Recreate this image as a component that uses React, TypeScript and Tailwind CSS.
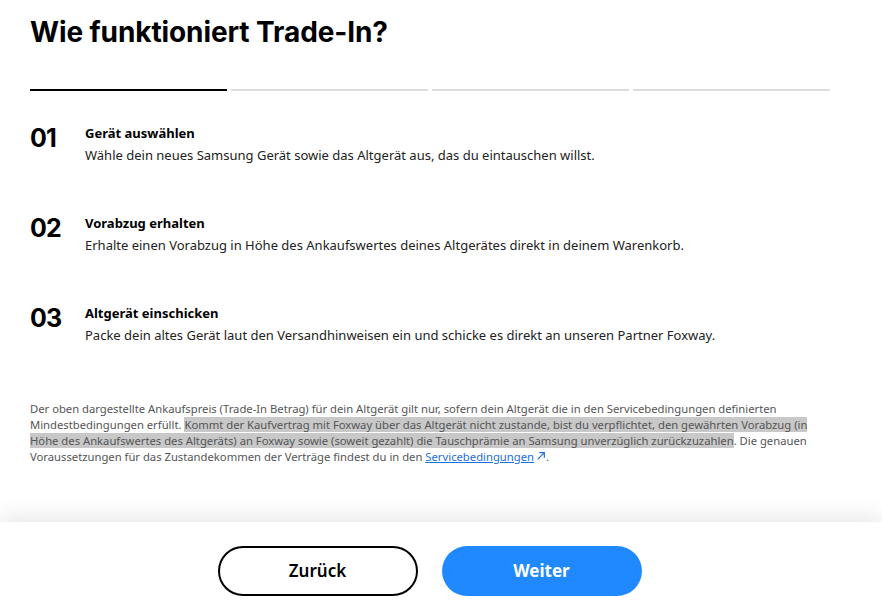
import React from 'react';

const steps = [
  {
    num: '01',
    title: 'Gerät auswählen',
    text: 'Wähle dein neues Samsung Gerät sowie das Altgerät aus, das du eintauschen willst.',
  },
  {
    num: '02',
    title: 'Vorabzug erhalten',
    text: 'Erhalte einen Vorabzug in Höhe des Ankaufswertes deines Altgerätes direkt in deinem Warenkorb.',
  },
  {
    num: '03',
    title: 'Altgerät einschicken',
    text: 'Packe dein altes Gerät laut den Versandhinweisen ein und schicke es direkt an unseren Partner Foxway.',
  },
];

const ExternalArrow = () => (
  <svg width="10" height="10" viewBox="0 0 12 12" className="inline align-baseline ml-[2px]" fill="none">
    <path d="M2 10L10 2M4 2h6v6" stroke="currentColor" strokeWidth="1.4" />
  </svg>
);

export default function App() {
  return (
    <div className="h-screen w-full bg-white flex flex-col overflow-hidden font-['Noto_Sans',sans-serif]">
      <div className="flex-1 overflow-hidden px-[30px]">
        <h1 className="pt-[12px] text-[28px] leading-[40px] font-bold text-black tracking-[-0.1px] font-['Inter',sans-serif]">
          Wie funktioniert Trade-In?
        </h1>

        <div className="mt-[37px] flex gap-1 w-[800px] items-start">
          <div className="flex-1 h-[2px] bg-black" />
          <div className="flex-1 h-[2px] bg-[#dddddd]" />
          <div className="flex-1 h-[2px] bg-[#dddddd]" />
          <div className="flex-1 h-[2px] bg-[#dddddd]" />
        </div>

        <ul className="mt-[32px] flex flex-col gap-[46px]">
          {steps.map((s) => (
            <li key={s.num} className="flex items-start">
              <span className="w-[55px] shrink-0 text-[25px] leading-[30px] font-bold text-black font-['Inter',sans-serif] tracking-[-0.8px]">
                {s.num}
              </span>
              <div className="flex flex-col">
                <span className="text-[13px] leading-[20px] font-bold text-black">{s.title}</span>
                <span className="text-[13px] leading-[24px] text-[#222]">{s.text}</span>
              </div>
            </li>
          ))}
        </ul>

        <p className="mt-[54px] w-[800px] text-[11.25px] leading-[16px] text-[#555]">
          Der oben dargestellte Ankaufspreis (Trade-In Betrag) für dein Altgerät gilt nur, sofern dein Altgerät die in den
          Servicebedingungen definierten Mindestbedingungen erfüllt.{' '}
          <span className="bg-[#c8c8c8]">
            Kommt der Kaufvertrag mit Foxway über das Altgerät nicht zustande, bist du verpflichtet, den gewährten Vorabzug
            (in Höhe des Ankaufswertes des Altgeräts) an Foxway sowie (soweit gezahlt) die Tauschprämie an Samsung
            unverzüglich zurückzuzahlen
          </span>
          . Die genauen Voraussetzungen für das Zustandekommen der Verträge findest du in den{' '}
          <a href="#" className="text-[#1a6fe0] underline">
            Servicebedingungen
          </a>
          <span className="text-[#1a6fe0]">
            <ExternalArrow />
          </span>
          .
        </p>
      </div>

      <footer className="h-[93px] shrink-0 bg-white shadow-[0_-6px_20px_rgba(0,0,0,0.09)]">
        <div className="w-[859px] flex justify-center gap-6 pt-[24px]">
          <button className="w-[200px] h-[50px] rounded-full border-2 border-black bg-white text-[17px] font-semibold text-black">
            Zurück
          </button>
          <button className="w-[200px] h-[50px] rounded-full bg-[#2189ff] text-[17px] font-bold text-white">
            Weiter
          </button>
        </div>
      </footer>
    </div>
  );
}
